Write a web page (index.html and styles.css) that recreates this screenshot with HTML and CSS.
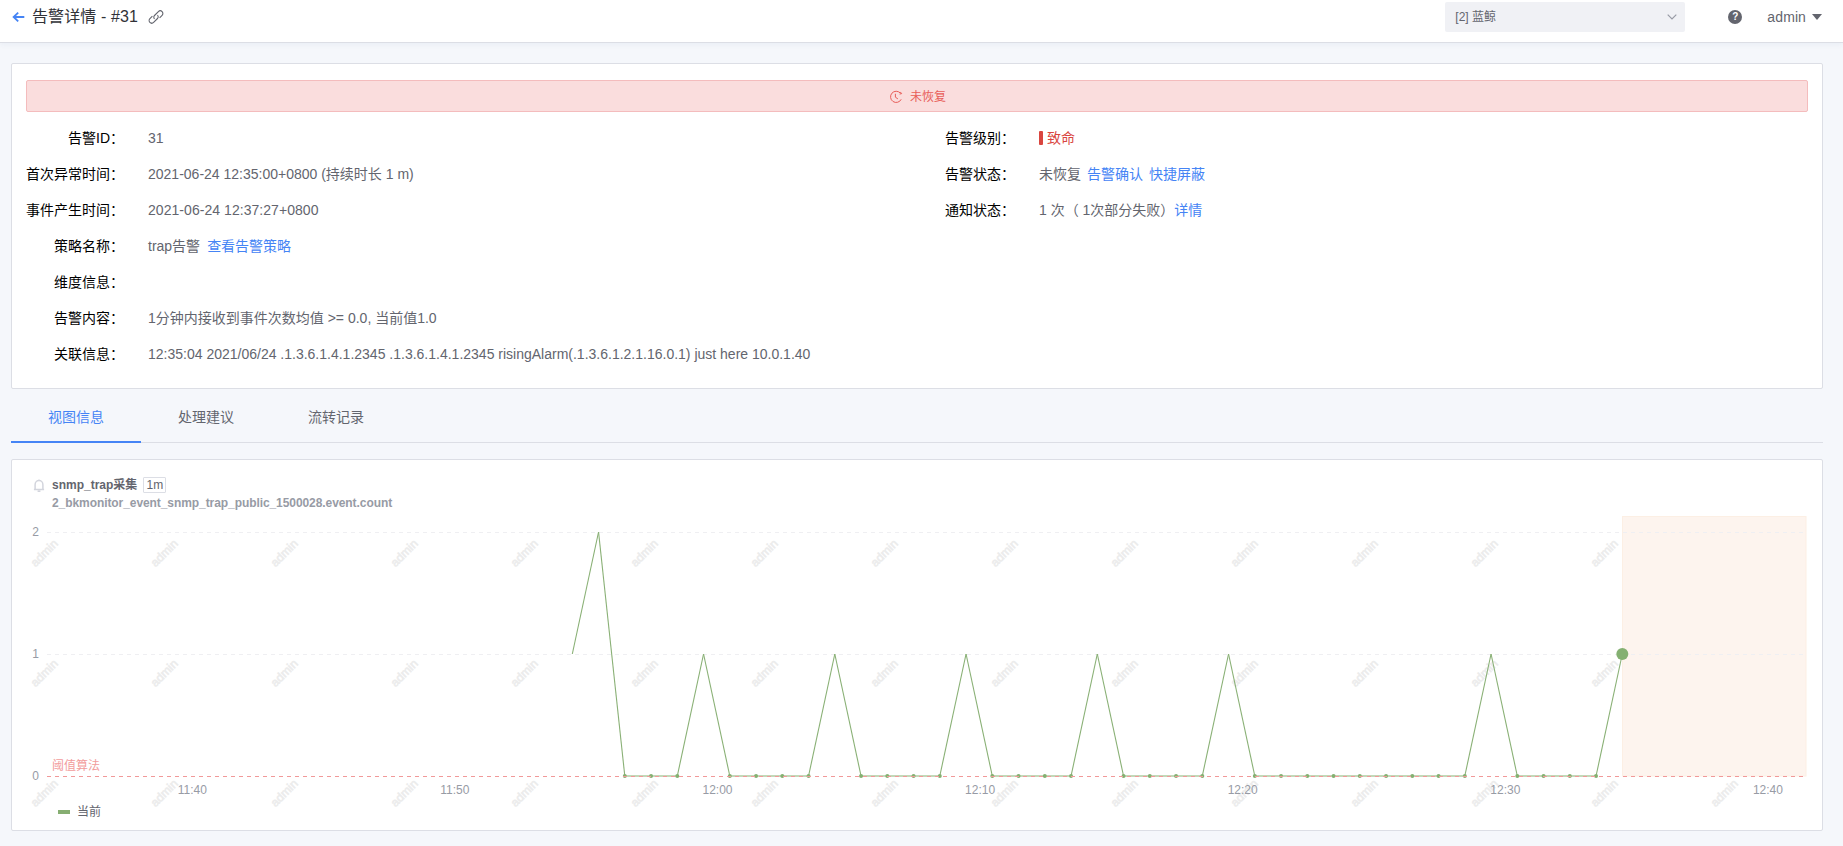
FILE: index.html
```html
<!DOCTYPE html>
<html lang="zh-CN">
<head>
<meta charset="utf-8">
<title>告警详情 - #31</title>
<link rel="stylesheet" href="styles.css">
</head>
<body>
<header class="header">
  <svg class="back" width="13" height="12" viewBox="0 0 13 12"><path d="M12.3 6H1.5M6.2 1.6L1.6 6l4.6 4.4"/></svg>
  <h1 class="title">告警详情 - #31</h1>
  <svg class="link-icon" width="16" height="16" viewBox="0 0 16 16"><path d="M6.600 9.900a2.300 2.300 0 0 1-.1-3.400l3.900-3.900a2.600 2.600 0 0 1 3.700 3.700l-2.500 2.500M9.400 6.100a2.300 2.300 0 0 1 .1 3.400l-3.900 3.900a2.600 2.600 0 0 1-3.700-3.700l2.500-2.500"/></svg>
  <div class="select"><span>[2] 蓝鲸</span><svg width="10" height="6" viewBox="0 0 10 6"><path d="M.7.7L5 5 9.300.7"/></svg></div>
  <span class="help">?</span>
  <div class="user"><span>admin</span><i class="caret"></i></div>
</header>
<main class="page">
  <section class="card detail">
    <div class="banner">
      <svg width="14" height="14" viewBox="0 0 14 14"><path d="M12.200 9.300A5.600 5.600 0 1 1 11.400 3.200M11.200 1.900L12.700 3.600 10.600 4.100M6.400 3.800V7.200L8.900 8.900"/></svg>
      <span>未恢复</span>
    </div>
    <div class="columns">
      <dl class="list wide">
        <dt>告警ID：</dt><dd>31</dd>
        <dt>首次异常时间：</dt><dd>2021-06-24 12:35:00+0800 (持续时长 1 m)</dd>
        <dt>事件产生时间：</dt><dd class="stamp">2021-06-24 12:37:27+0800</dd>
        <dt>策略名称：</dt><dd>trap告警<a class="policy">查看告警策略</a></dd>
        <dt>维度信息：</dt><dd></dd>
        <dt>告警内容：</dt><dd>1分钟内接收到事件次数均值 &gt;= 0.0, 当前值1.0</dd>
        <dt>关联信息：</dt><dd>12:35:04 2021/06/24 .1.3.6.1.4.1.2345 .1.3.6.1.4.1.2345 risingAlarm(.1.3.6.1.2.1.16.0.1) just here 10.0.1.40</dd>
      </dl>
      <dl class="list">
        <dt>告警级别：</dt><dd class="fatal">致命</dd>
        <dt>告警状态：</dt><dd>未恢复<a>告警确认</a><a>快捷屏蔽</a></dd>
        <dt>通知状态：</dt><dd>1 次（ 1次部分失败）<a class="flush">详情</a></dd>
      </dl>
    </div>
  </section>
  <nav class="tabs">
    <span class="tab active">视图信息</span>
    <span class="tab">处理建议</span>
    <span class="tab">流转记录</span>
  </nav>
  <section class="card chart">
    <div class="chart-head">
      <svg width="12" height="13" viewBox="0 0 12 13"><path d="M.9 10.500H11.100M2.100 10.300V5.800A3.900 4.200 0 0 1 9.900 5.800V10.300M4.600 12.200H7.400M6 .4V1.600"/></svg>
      <div>
        <div class="chart-title">snmp_trap采集<span class="step">1m</span></div>
        <div class="chart-sub">2_bkmonitor_event_snmp_trap_public_1500028.event.count</div>
      </div>
    </div>
    <svg class="plot" id="plot" width="1810" height="286" viewBox="12 512 1810 286"></svg>
    <div class="legend"><i></i>当前</div>
  </section>
</main>
<script src="chart.js"></script>
</body>
</html>
```

FILE: styles.css
```css
* { box-sizing: border-box; }
body {
  margin: 0;
  height: 846px;
  overflow: hidden;
  background: #f5f7fb;
  color: #63656e;
  font: 14px/20px "Liberation Sans", "Noto Sans CJK SC", sans-serif;
}
svg { display: block; flex: none; fill: none; }
.header {
  display: flex;
  align-items: center;
  height: 43px;
  padding: 0 21px 9px 12px;
  background: #fff;
  border-bottom: 1px solid #dcdee5;
  box-shadow: 0 2px 5px rgba(60, 100, 150, .06);
}
.back { stroke: #4584f5; stroke-width: 1.8; }
.title { margin: 0 0 0 7px; font-size: 16px; font-weight: 400; line-height: 24px; letter-spacing: .1px; color: #313238; white-space: nowrap; }
.link-icon { margin-left: 10px; stroke: #63656e; stroke-width: 1.1; }
.select {
  display: flex;
  align-items: center;
  justify-content: space-between;
  width: 240px;
  height: 30px;
  margin: 0 0 0 auto;
  padding: 0 8px 0 10px;
  border-radius: 2px;
  background: #f0f1f5;
  font-size: 12px;
}
.select svg { stroke: #979ba5; stroke-width: 1.2; }
.help {
  width: 14px;
  height: 14px;
  margin: 1px 0 0 43px;
  border-radius: 50%;
  background: #63656e;
  color: #fff;
  font-size: 10px;
  font-weight: 700;
  line-height: 14px;
  text-align: center;
}
.user { display: flex; align-items: center; margin: 1px 0 0 25px; }
.user span { letter-spacing: .1px; }
.caret { margin-left: 6px; border: 5px solid transparent; border-top: 6px solid #63656e; border-bottom: 0; }
.page { padding: 20px 20px 0 11px; }
.card { background: #fff; border: 1px solid #dcdee5; border-radius: 2px; }
.detail { height: 326px; padding: 16px 14px 0; }
.banner {
  display: flex;
  align-items: center;
  justify-content: center;
  gap: 7px;
  height: 32px;
  padding: 1px 0 0 1px;
  border: 1px solid #f4bcbd;
  border-radius: 2px;
  background: #fadddd;
  color: #e85d59;
  font-size: 12px;
}
.banner svg { stroke: #e85d59; stroke-width: 1; }
.columns { display: flex; padding-top: 8px; }
.list {
  display: grid;
  grid-template-columns: 70px auto;
  grid-auto-rows: 36px;
  column-gap: 24px;
  align-items: center;
  align-content: start;
  margin: 0;
  white-space: nowrap;
}
.wide { width: 919px; grid-template-columns: 98px 1fr; }
dt { text-align: right; color: #000; }
dd { margin: 0; }
.stamp { letter-spacing: .05px; }
a { margin-left: 6px; color: #4584f5; }
a.policy { margin-left: 7px; }
a.flush { margin-left: 0; }
.fatal { display: flex; align-items: center; gap: 4px; color: #d9463f; }
.fatal::before { content: ""; width: 4px; height: 14px; border-radius: 1px; background: #d9463f; }
.tabs { display: flex; height: 54px; border-bottom: 1px solid #dcdee5; }
.tab { width: 130px; height: 54px; padding-top: 18px; text-align: center; }
.active { color: #4584f5; border-bottom: 2px solid #4584f5; }
.chart { height: 372px; margin-top: 16px; }
.chart-head { display: flex; gap: 7px; height: 52px; padding: 16px 0 0 21px; font-size: 12px; font-weight: 700; }
.chart-head > svg { margin-top: 3px; stroke: #d3d5dd; stroke-width: 1.5; }
.chart-title { display: flex; align-items: center; gap: 6px; height: 18px; }
.step { width: 23px; height: 16px; border: 1px solid #dcdee5; border-radius: 1px; font-weight: 400; line-height: 14px; text-align: center; }
.chart-sub { height: 18px; line-height: 18px; letter-spacing: -.075px; color: #979ba5; }
.plot { overflow: visible; font-size: 12px; }
.plot text { fill: #979ba5; }
.plot .watermark { fill: #ececec; font-size: 12px; stroke: #ececec; stroke-width: .6; }
.plot .threshold-label { fill: #f29c9c; }
.grid { stroke: #efeff2; stroke-dasharray: 4 4; }
.threshold { stroke: #f19999; stroke-dasharray: 4 4; }
.area { fill: #fdf4ee; stroke: #fcefe4; }
.series { stroke: #89b075; stroke-width: 1.1; stroke-linejoin: bevel; }
.flat { stroke: #c3d8b8; stroke-width: 2; }
.dot { fill: #84b071; }
.legend { display: flex; align-items: center; gap: 7px; padding-left: 46px; font-size: 12px; line-height: 28px; }
.legend i { width: 12px; height: 4px; background: #86ae72; }
```

FILE: chart.js
```js
const plot = document.getElementById('plot');
const NS = 'http://www.w3.org/2000/svg';

function add(tag, attrs, text) {
  const node = document.createElementNS(NS, tag);
  for (const key in attrs) node.setAttribute(key, attrs[key]);
  if (text) node.textContent = text;
  plot.appendChild(node);
}

// Watermark tiles repeat every 120px in both directions.
for (let row = 0; row < 3; row++) {
  for (let col = 0; col < 15; col++) {
    if (col === 14 && row < 2) continue;
    const x = 35.5 + col * 120;
    const y = 567.5 + row * 120;
    add('text', { class: 'watermark', x, y, transform: `rotate(-45 ${x} ${y})` }, 'admin');
  }
}

add('rect', { class: 'area', x: 1622.5, y: 516.5, width: 183.5, height: 259.5 });
add('path', { class: 'grid', d: 'M47 532.5H1805M47 654.5H1805' });

const values = Array(41).fill(0);
[0, 5, 10, 15, 20, 25, 35, 40].forEach(i => { values[i] = 1; });
values[1] = 2;
const px = i => 572.3 + i * 26.25;
const py = v => 776 - v * 122;

for (let i = 1; i < values.length; i++) {
  const flat = values[i] === 0 && values[i - 1] === 0;
  add('path', { class: flat ? 'flat' : 'series', d: `M${px(i - 1)} ${py(values[i - 1])}L${px(i)} ${py(values[i])}` });
}
values.forEach((v, i) => {
  if (v === 0) add('circle', { class: 'dot', cx: px(i), cy: py(v), r: 2 });
});
add('circle', { class: 'dot', cx: px(40), cy: py(1), r: 6 });
add('path', { class: 'threshold', d: 'M47 776.5H1805' });
add('text', { class: 'threshold-label', x: 52, y: 769.5 }, '阈值算法');

[2, 1, 0].forEach(v => add('text', { x: 39, y: py(v) + 4, 'text-anchor': 'end' }, String(v)));
['11:40', '11:50', '12:00', '12:10', '12:20', '12:30', '12:40'].forEach((label, i) => {
  add('text', { x: 192.3 + i * 262.6, y: 794, 'text-anchor': 'middle' }, label);
});
```
